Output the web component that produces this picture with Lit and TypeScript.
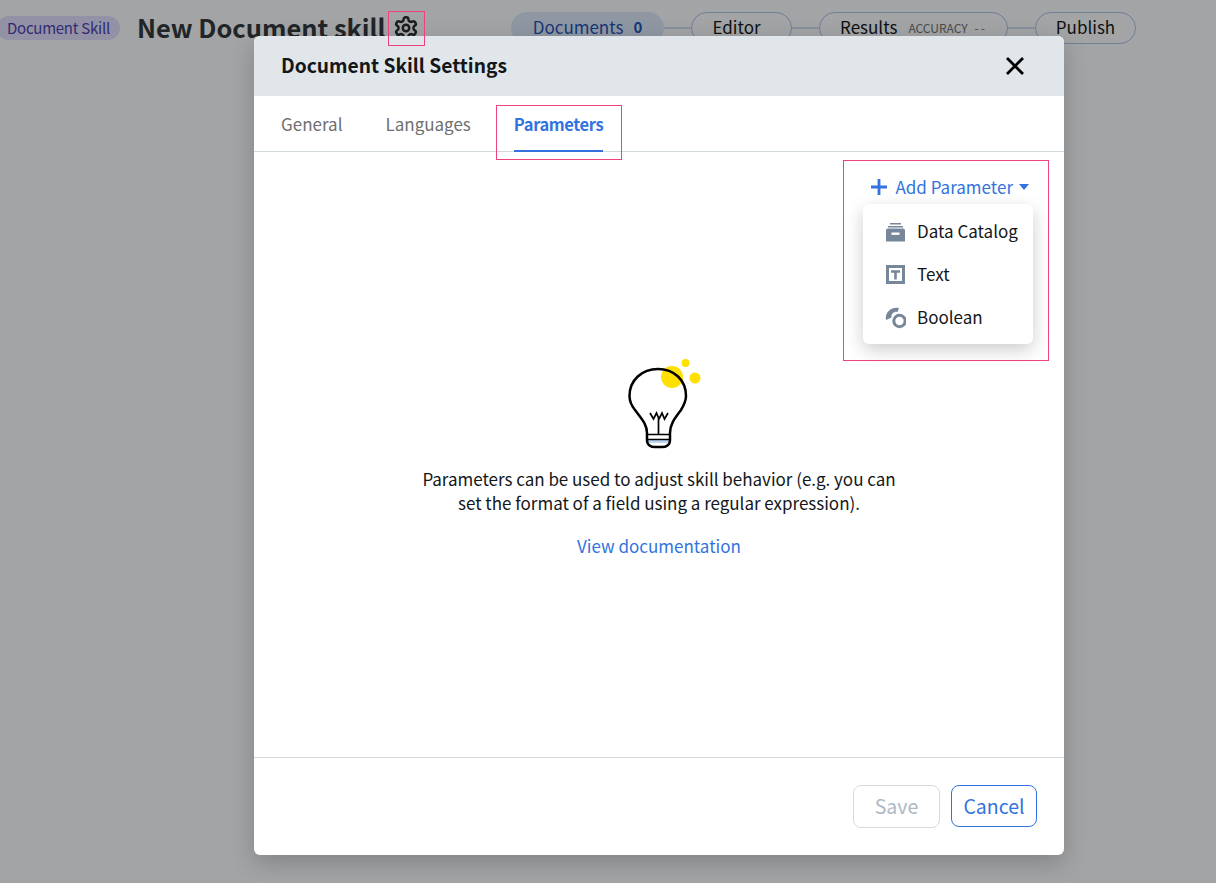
import { LitElement, html, css } from "lit";
import { customElement } from "lit/decorators.js";

@customElement("app-root")
export class AppRoot extends LitElement {
  static styles = css`
    :host {
      display: block;
      height: 883px;
      overflow: hidden;
      background: #fff;
      font-family: "Noto Sans CJK JP", "Noto Sans", sans-serif;
      color: #000;
      position: relative;
    }
    * { box-sizing: border-box; }
    .top { display: flex; align-items: center; height: 56px; }
    .kind {
      margin-left: -3px; width: 123px; height: 24px; padding: 0 10px; border-radius: 12px; background: #e6dfff;
      color: #3b2fa8; font-size: 15px; letter-spacing: -0.25px; line-height: 23px; white-space: nowrap;
    }
    .title { margin-left: 17px; width: 247px; font-size: 25.4px; line-height: 34px; font-weight: 700; color: #212529; white-space: nowrap; margin-top: -2px; }
    .gear { margin-left: 9px; width: 26px; height: 26px; display: block; flex: none; margin-top: -1px; }
    .steps { margin-left: 92px; display: flex; align-items: center; }
    .step {
      height: 32px; border-radius: 16px; border: 1px solid #a9bfe6; display: flex; align-items: center; justify-content: center;
      font-size: 17px; white-space: nowrap; line-height: 22px; padding-bottom: 2px;
    }
    .step.on { background: #dfe8fb; color: #0b46b0; border-color: #dfe8fb; gap: 10px; }
    .step.ed { padding-right: 10px; }
    .step b { font-weight: 700; font-size: 15px; }
    .step small { font-size: 12px; color: #666; margin-left: 11px; padding-top: 2px; }
    .step small span { margin-left: 7px; letter-spacing: 2px; }
    .line { width: 27px; height: 2px; background: #d3ddf0; }

    .overlay {
      position: absolute; inset: 0; background: rgba(33, 37, 41, 0.42);
      padding: 36px 0 0 254px;
    }
    .modal {
      width: 810px; height: 819px; background: #fff; border-radius: 6px; display: flex; flex-direction: column;
      box-shadow: 0 8px 24px rgba(0, 0, 0, 0.2); overflow: hidden;
    }
    .head {
      height: 60px; flex: none; background: #e1e6ea; display: flex; align-items: center; justify-content: space-between;
      padding: 0 39px 0 27px;
    }
    .head h2 { margin: 0 0 2px; font-size: 19.2px; line-height: 28px; font-weight: 700; color: #14171a; }
    .close { width: 20px; height: 20px; display: block; }
    .tabs { height: 56px; flex: none; display: flex; gap: 43px; padding-left: 27px; border-bottom: 1px solid #d3dadb; }
    .tab { height: 56px; font-size: 17px; color: #6f6f6f; border-bottom: 2px solid transparent; white-space: nowrap; }
    .tab span { display: block; line-height: 24px; padding-top: 16px; }
    .tab.on { color: #3273e0; font-weight: 700; border-bottom-color: #3273e0; font-size: 16.500px; letter-spacing: -0.38px; }
    .body { flex: 1; position: relative; display: flex; flex-direction: column; align-items: center; }
    .add {
      position: absolute; top: 23px; right: 33px; display: flex; align-items: center; color: #3273e0; font-size: 17px; line-height: 24px;
    }
    .add .plus { width: 18px; height: 18px; margin-right: 7px; display: block; }
    .add .caret { width: 10px; height: 6px; margin-left: 6px; margin-right: 2px; display: block; }
    .menu {
      position: absolute; top: 52px; right: 31px; width: 170px; height: 140px; background: #fff; border-radius: 6px;
      box-shadow: 0 6px 18px rgba(0, 0, 0, 0.2); padding-top: 5px;
    }
    .item { height: 43px; display: flex; align-items: center; padding-left: 22px; gap: 11px; font-size: 17px; color: #14171a; white-space: nowrap; }
    .item svg { width: 21px; height: 22px; display: block; flex: none; margin-top: 2px; }
    .empty { margin-top: 198px; display: flex; flex-direction: column; align-items: center; }
    .bulb { width: 100px; height: 105px; display: block; margin-left: 2px; }
    .empty p { margin: 12px 0 0; width: 480px; text-align: center; font-size: 17px; letter-spacing: -0.02px; line-height: 24px; color: #14171a; }
    .empty a { margin-top: 19px; font-size: 17px; line-height: 24px; color: #3273e0; }
    .foot {
      height: 98px; flex: none; border-top: 1px solid #d3dadb; display: flex; justify-content: flex-end; align-items: flex-start;
      gap: 11px; padding: 27px 27px 0 0;
    }
    .btn { height: 43px; border-radius: 8px; font: inherit; font-size: 19.500px; line-height: 24px; background: #fff; padding: 0 0 1px; display: flex; align-items: center; justify-content: center; }
    .save { width: 87px; border: 1px solid #d3dae0; color: #adb8c4; }
    .cancel { width: 86px; height: 42px; border: 1px solid #3273e0; color: #3273e0; }
    .mark { position: absolute; border: 1px solid #f0417f; pointer-events: none; }
    .m1 { left: 388px; top: 11px; width: 37px; height: 35px; }
    .m2 { left: 496px; top: 105px; width: 126px; height: 55px; }
    .m3 { left: 843px; top: 160px; width: 206px; height: 201px; }
  `;

  render() {
    return html`
      <div class="top">
        <span class="kind">Document Skill</span>
        <span class="title">New Document skill</span>
        <svg class="gear" viewBox="0 0 24 24" fill="none" stroke="#14171a" stroke-width="2.300" stroke-linejoin="round">
          <path d="M12.22 2h-.44a2 2 0 0 0-2 2v.18a2 2 0 0 1-1 1.73l-.43.25a2 2 0 0 1-2 0l-.15-.08a2 2 0 0 0-2.73.73l-.22.38a2 2 0 0 0 .73 2.73l.15.1a2 2 0 0 1 1 1.72v.51a2 2 0 0 1-1 1.74l-.15.09a2 2 0 0 0-.73 2.73l.22.38a2 2 0 0 0 2.73.73l.15-.08a2 2 0 0 1 2 0l.43.25a2 2 0 0 1 1 1.73V20a2 2 0 0 0 2 2h.44a2 2 0 0 0 2-2v-.18a2 2 0 0 1 1-1.73l.43-.25a2 2 0 0 1 2 0l.15.08a2 2 0 0 0 2.73-.73l.22-.39a2 2 0 0 0-.73-2.73l-.15-.08a2 2 0 0 1-1-1.74v-.5a2 2 0 0 1 1-1.74l.15-.09a2 2 0 0 0 .73-2.73l-.22-.38a2 2 0 0 0-2.73-.73l-.15.08a2 2 0 0 1-2 0l-.43-.25a2 2 0 0 1-1-1.73V4a2 2 0 0 0-2-2z"/>
          <circle cx="12" cy="12" r="3"/>
        </svg>
        <div class="steps">
          <div class="step on" style="width:153px">Documents <b>0</b></div>
          <div class="line"></div>
          <div class="step ed" style="width:101px">Editor</div>
          <div class="line"></div>
          <div class="step" style="width:189px">Results <small>ACCURACY<span>--</span></small></div>
          <div class="line"></div>
          <div class="step" style="width:101px">Publish</div>
        </div>
      </div>

      <div class="overlay">
        <div class="modal">
          <div class="head">
            <h2>Document Skill Settings</h2>
            <svg class="close" viewBox="0 0 20 20" stroke="#000" stroke-width="2.800" fill="none"><path d="M2 2l16 16M18 2L2 18"/></svg>
          </div>
          <div class="tabs">
            <div class="tab"><span>General</span></div>
            <div class="tab"><span>Languages</span></div>
            <div class="tab on"><span>Parameters</span></div>
          </div>
          <div class="body">
            <div class="empty">
              <svg class="bulb" viewBox="0 0 100 105" fill="none">
                <circle cx="62" cy="27" r="11" fill="#ffe000"/>
                <circle cx="75.500" cy="13" r="4" fill="#ffe000"/>
                <circle cx="85" cy="28" r="5.500" fill="#ffe000"/>
                <rect x="38" y="89" width="21" height="4" fill="#bcd6f2"/>
                <path d="M37 83C37 74 31 68 25 60C21 55 19.500 50 19.500 46C19.500 30 32 19 48 19C64 19 76 30 76 46C76 50 74 55 71 60C65 68 60 74 60 83V90C60 95 56 97 52 97H45C41 97 37 95 37 90Z" stroke="#000" stroke-width="2.500"/>
                <path d="M37 84.500H60M37 89.500H60M48.500 68V84M40 63L43.500 69L46.500 63L49 69L52 63L54.500 69L58 63" stroke="#000" stroke-width="1.700"/>
              </svg>
              <p>Parameters can be used to adjust skill behavior (e.g. you can set the format of a field using a regular expression).</p>
              <a>View documentation</a>
            </div>
            <div class="add">
              <svg class="plus" viewBox="0 0 18 18" stroke="#3273e0" stroke-width="2.800" fill="none"><path d="M9 1v16M1 9h16"/></svg>
              Add Parameter
              <svg class="caret" viewBox="0 0 10 6" fill="#3273e0"><path d="M0 0h10L5 6z"/></svg>
            </div>
            <div class="menu">
              <div class="item">
                <svg viewBox="0 0 21 22" fill="#76879a">
                  <rect x="5" y="2" width="11" height="1.500"/><rect x="3" y="5" width="15" height="1.500"/>
                  <path d="M1 9.500a2 2 0 0 1 2-2h15a2 2 0 0 1 2 2v11H1z"/>
                  <rect x="6.500" y="11.500" width="8" height="2.400" fill="#fff"/>
                </svg>
                Data Catalog
              </div>
              <div class="item">
                <svg viewBox="0 0 21 22" fill="none" stroke="#76879a" stroke-width="3">
                  <rect x="2.500" y="2.500" width="16" height="16"/>
                  <path d="M6 7.500h9M10.500 7.500v8" stroke-width="2.600"/>
                </svg>
                Text
              </div>
              <div class="item">
                <svg viewBox="0 0 21 22" fill="none" stroke="#76879a" stroke-width="3">
                  <circle cx="14.500" cy="14" r="5.700"/>
                  <path d="M1 13C-.5 6 6-.5 14 1L12.500 5C9 4 6 7 6.500 10.500Z" fill="#76879a" stroke="none"/>
                </svg>
                Boolean
              </div>
            </div>
          </div>
          <div class="foot">
            <button class="btn save">Save</button>
            <button class="btn cancel">Cancel</button>
          </div>
        </div>
      </div>
      <div class="mark m1"></div>
      <div class="mark m2"></div>
      <div class="mark m3"></div>
    `;
  }
}
